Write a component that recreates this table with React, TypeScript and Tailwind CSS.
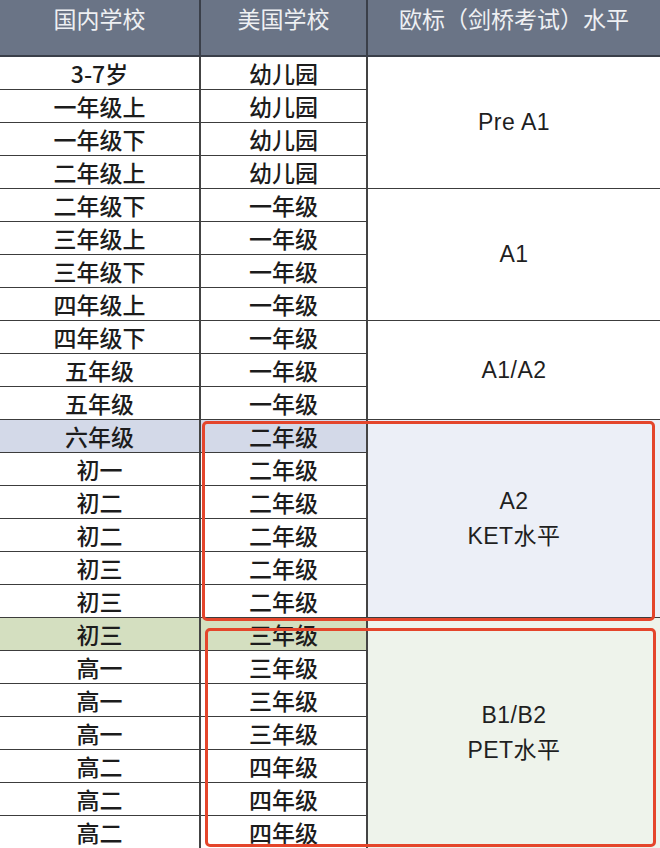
import React from "react";

const rows: { a: string; b: string; hl?: "blue" | "green" }[] = [
  { a: "3-7岁", b: "幼儿园" },
  { a: "一年级上", b: "幼儿园" },
  { a: "一年级下", b: "幼儿园" },
  { a: "二年级上", b: "幼儿园" },
  { a: "二年级下", b: "一年级" },
  { a: "三年级上", b: "一年级" },
  { a: "三年级下", b: "一年级" },
  { a: "四年级上", b: "一年级" },
  { a: "四年级下", b: "一年级" },
  { a: "五年级", b: "一年级" },
  { a: "五年级", b: "一年级" },
  { a: "六年级", b: "二年级", hl: "blue" },
  { a: "初一", b: "二年级" },
  { a: "初二", b: "二年级" },
  { a: "初二", b: "二年级" },
  { a: "初三", b: "二年级" },
  { a: "初三", b: "二年级" },
  { a: "初三", b: "三年级", hl: "green" },
  { a: "高一", b: "三年级" },
  { a: "高一", b: "三年级" },
  { a: "高一", b: "三年级" },
  { a: "高二", b: "四年级" },
  { a: "高二", b: "四年级" },
  { a: "高二", b: "四年级" },
];

const groups: { start: number; span: string; lines: string[]; bg: string }[] = [
  { start: 0, span: "row-span-4", lines: ["Pre A1"], bg: "bg-white" },
  { start: 4, span: "row-span-4", lines: ["A1"], bg: "bg-white" },
  { start: 8, span: "row-span-3", lines: ["A1/A2"], bg: "bg-white" },
  { start: 11, span: "row-span-6", lines: ["A2", "KET水平"], bg: "bg-[#eceff7]" },
  { start: 17, span: "row-span-7", lines: ["B1/B2", "PET水平"], bg: "bg-[#eef3eb]" },
];

const font = { fontFamily: '"Noto Sans CJK SC", sans-serif' };

export default function App() {
  const cells: React.ReactNode[] = [];
  rows.forEach((r, i) => {
    const bg =
      r.hl === "blue" ? "bg-[#d3d9e8]" : r.hl === "green" ? "bg-[#d4dfc0]" : "bg-white";
    cells.push(
      <div
        key={`a${i}`}
        className={`col-start-1 flex items-center justify-center border-b border-r-2 border-b-[#3c3c3c] border-r-[#444] text-[23px] font-medium leading-none text-[#1c1c1c] ${bg}`}
      >
        {r.a}
      </div>
    );
    cells.push(
      <div
        key={`b${i}`}
        className={`col-start-2 flex items-center justify-center border-b border-r-2 border-b-[#3c3c3c] border-r-[#444] text-[23px] font-medium leading-none text-[#1c1c1c] ${bg}`}
      >
        {r.b}
      </div>
    );
    const g = groups.find((x) => x.start === i);
    if (g) {
      cells.push(
        <div
          key={`c${i}`}
          className={`col-start-3 ${g.span} flex flex-col items-center justify-center border-b border-b-[#3c3c3c] ${g.bg}`}
        >
          {g.lines.map((l, k) => (
            <div
              key={k}
              className="text-[23px] leading-[35px] tracking-[0.5px] text-[#1f1f1f]"
              style={{ fontFamily: '"Liberation Sans", "Noto Sans CJK SC", sans-serif' }}
            >
              {l}
            </div>
          ))}
        </div>
      );
    }
  });

  return (
    <div className="h-[848px] w-[660px] overflow-hidden bg-white" style={font}>
      <div className="relative">
        <div className="grid grid-cols-[201px_167px_1fr] grid-rows-[57px_repeat(24,33px)]">
          <div className="col-start-1 flex items-center justify-center border-b-2 border-r-2 border-[#3a3f49] bg-[#6a7486] pb-[18px] text-[23px] leading-none text-[#eef0f3]">
            国内学校
          </div>
          <div className="col-start-2 flex items-center justify-center border-b-2 border-r-2 border-[#3a3f49] bg-[#6a7486] pb-[18px] text-[23px] leading-none text-[#eef0f3]">
            美国学校
          </div>
          <div className="col-start-3 flex items-center justify-center border-b-2 border-[#3a3f49] bg-[#6a7486] pb-[18px] text-[23px] leading-none text-[#eef0f3]">
            欧标（剑桥考试）水平
          </div>
          {cells}
        </div>
        <div className="pointer-events-none absolute left-[202px] top-[421px] h-[200px] w-[453px] rounded-[5px] border-[3px] border-[#e4452b]" />
        <div className="pointer-events-none absolute left-[205px] top-[628px] h-[219px] w-[451px] rounded-[5px] border-[3px] border-[#e4452b]" />
      </div>
    </div>
  );
}
